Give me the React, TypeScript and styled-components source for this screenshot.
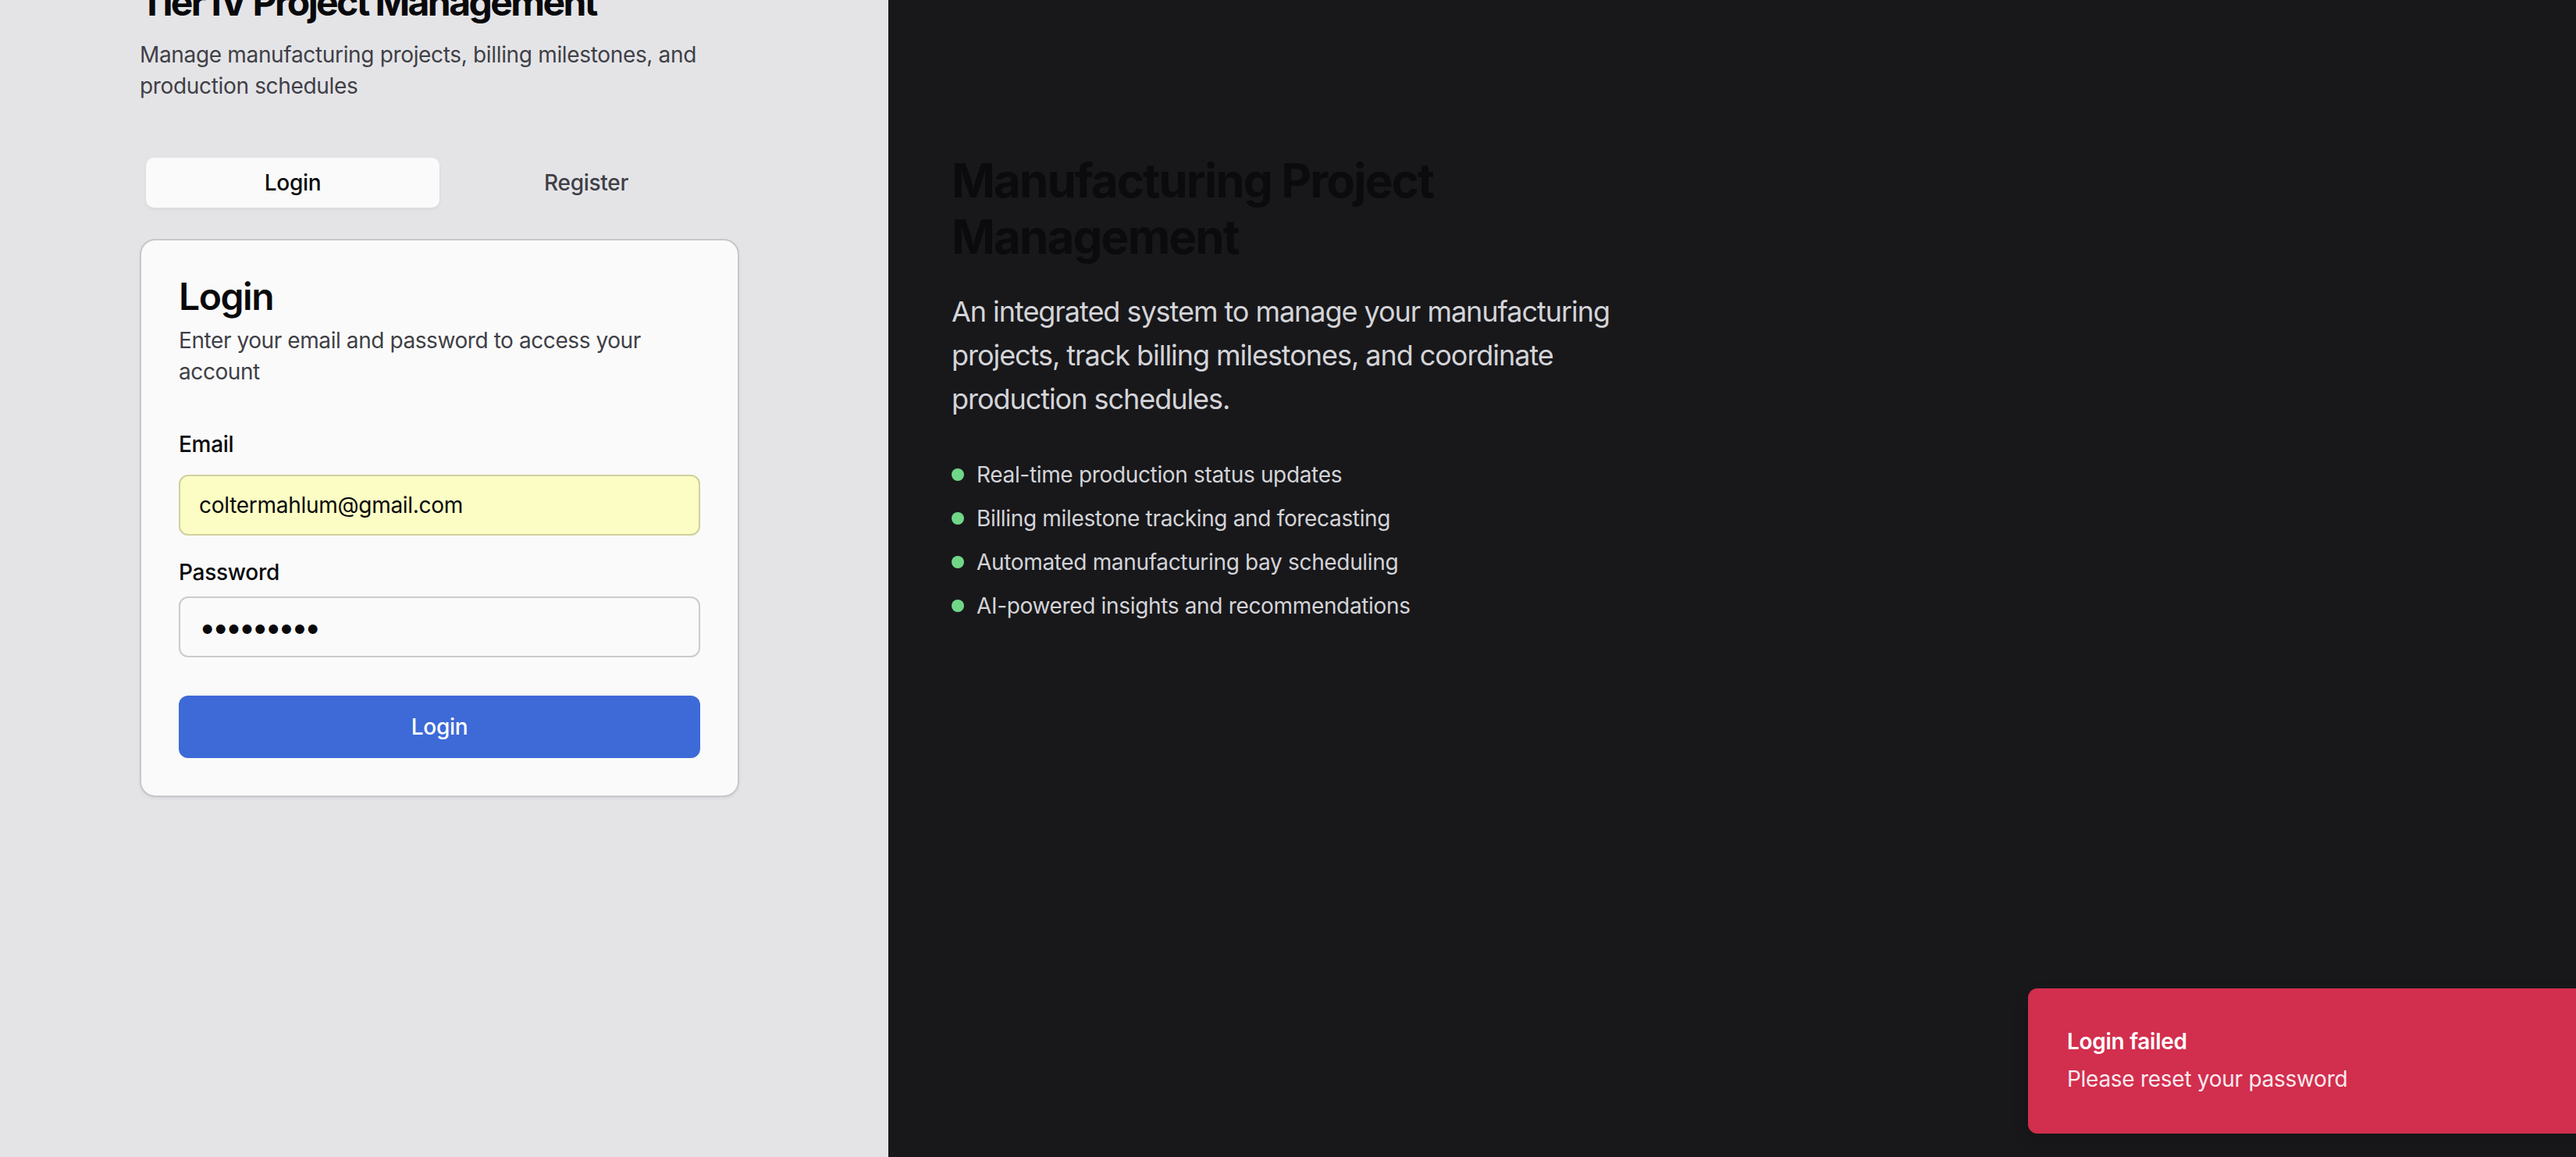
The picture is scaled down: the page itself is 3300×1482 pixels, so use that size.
import React from "react";
import styled, { createGlobalStyle } from "styled-components";

const GlobalStyle = createGlobalStyle`
  html, body {
    margin: 0;
    padding: 0;
    width: 3300px;
    height: 1482px;
    overflow: hidden;
    font-family: Inter, "Noto Sans", "Liberation Sans", sans-serif;
    -webkit-font-smoothing: antialiased;
  }
  * { box-sizing: border-box; }
`;

const Page = styled.div`
  position: relative;
  display: grid;
  grid-template-columns: 1138px 1fr;
  width: 3300px;
  height: 1482px;
  overflow: hidden;
`;

const LeftPanel = styled.section`
  background: #e4e4e7;
  padding-left: 179px;
`;

const LeftInner = styled.div`
  width: 768px;
  margin-top: -29px;
  display: flex;
  flex-direction: column;
`;

const AppTitle = styled.h1`
  margin: 0;
  font-size: 48px;
  line-height: 64px;
  font-weight: 700;
  letter-spacing: -0.054em;
  color: #09090b;
`;

const AppSubtitle = styled.p`
  margin: 15px 0 0;
  font-size: 28px;
  line-height: 40px;
  color: #3f3f46;
  letter-spacing: -0.012em;
`;

const TabList = styled.div`
  margin-top: 64px;
  height: 80px;
  padding: 8px;
  display: grid;
  grid-template-columns: 1fr 1fr;
  border-radius: 12px;
  background: #e4e4e7;
`;

const Tab = styled.button<{ $active?: boolean }>`
  border: none;
  border-radius: 10px;
  font-family: inherit;
  font-size: 28px;
  font-weight: 500;
  letter-spacing: -0.01em;
  cursor: pointer;
  background: ${(p) => (p.$active ? "#fafafa" : "transparent")};
  color: ${(p) => (p.$active ? "#09090b" : "#3f3f46")};
  box-shadow: ${(p) => (p.$active ? "0 2px 4px rgba(0,0,0,0.06)" : "none")};
`;

const Card = styled.div`
  margin-top: 32px;
  background: #fafafa;
  border: 2px solid #c7c7cb;
  border-radius: 20px;
  padding: 48px;
  box-shadow: 0 2px 4px rgba(0, 0, 0, 0.05);
  display: flex;
  flex-direction: column;
`;

const CardTitle = styled.h2`
  margin: 0;
  font-size: 48px;
  line-height: 48px;
  font-weight: 600;
  letter-spacing: -0.03em;
  color: #09090b;
`;

const CardDescription = styled.p`
  margin: 12px 0 0;
  font-size: 28px;
  line-height: 40px;
  color: #3f3f46;
  letter-spacing: -0.015em;
`;

const Form = styled.form`
  margin-top: 48px;
  display: flex;
  flex-direction: column;
`;

const Label = styled.label<{ $top: number }>`
  margin-top: ${(p) => p.$top}px;
  font-size: 28px;
  line-height: 40px;
  font-weight: 500;
  color: #09090b;
  letter-spacing: -0.01em;
`;

const Input = styled.input<{ $autofill?: boolean; $top: number }>`
  margin-top: ${(p) => p.$top}px;
  height: 78px;
  width: 100%;
  padding: 0 24px;
  border-radius: 12px;
  border: 2px solid ${(p) => (p.$autofill ? "#cfd09e" : "#cbcbcd")};
  background: ${(p) => (p.$autofill ? "#fbfdc4" : "#fafafa")};
  font-family: inherit;
  font-size: 28px;
  color: #09090b;
  outline: none;
  letter-spacing: -0.01em;

  &[type="password"] {
    font-size: 38px;
    letter-spacing: -4.5px;
  }
`;

const SubmitButton = styled.button`
  margin-top: 49px;
  height: 80px;
  border: none;
  border-radius: 12px;
  background: #3d6ad7;
  color: #ffffff;
  font-family: inherit;
  font-size: 28px;
  font-weight: 500;
  letter-spacing: -0.01em;
  cursor: pointer;
`;

const RightPanel = styled.section`
  background: #18181b;
  padding: 195px 80px 80px 81px;
`;

const HeroTitle = styled.h2`
  margin: 0;
  max-width: 896px;
  font-size: 60px;
  line-height: 72px;
  font-weight: 700;
  letter-spacing: -0.031em;
  color: #0b0b0d;
`;

const HeroText = styled.p`
  margin: 32px 0 0;
  max-width: 896px;
  font-size: 36px;
  line-height: 56px;
  color: #d4d4d8;
  letter-spacing: -0.029em;
`;

const FeatureList = styled.ul`
  margin: 49px 0 0;
  padding: 0;
  list-style: none;
  display: flex;
  flex-direction: column;
  gap: 16px;
`;

const FeatureItem = styled.li`
  display: flex;
  align-items: center;
  gap: 16px;
  font-size: 28px;
  line-height: 40px;
  color: #d4d4d8;
  letter-spacing: -0.012em;
`;

const Dot = styled.span`
  width: 16px;
  height: 16px;
  border-radius: 50%;
  background: #70d789;
  flex-shrink: 0;
`;

const Toast = styled.div`
  position: absolute;
  left: 2598px;
  top: 1266px;
  width: 776px;
  padding: 46px 64px 48px 48px;
  background: #d22e4e;
  border: 2px solid #d22e4e;
  border-radius: 12px;
  display: grid;
  gap: 8px;
  color: #ffffff;
  box-shadow: 0 8px 20px rgba(0, 0, 0, 0.15);
`;

const ToastTitle = styled.div`
  font-size: 28px;
  line-height: 40px;
  font-weight: 600;
  letter-spacing: -0.01em;
`;

const ToastDescription = styled.div`
  font-size: 28px;
  line-height: 40px;
  opacity: 0.9;
  letter-spacing: -0.01em;
`;

const features = [
  "Real-time production status updates",
  "Billing milestone tracking and forecasting",
  "Automated manufacturing bay scheduling",
  "AI-powered insights and recommendations",
];

export default function App() {
  return (
    <>
      <GlobalStyle />
      <Page>
        <LeftPanel>
          <LeftInner>
            <AppTitle>Tier IV Project Management</AppTitle>
            <AppSubtitle>
              Manage manufacturing projects, billing milestones, and production schedules
            </AppSubtitle>
            <TabList>
              <Tab $active>Login</Tab>
              <Tab>Register</Tab>
            </TabList>
            <Card>
              <CardTitle>Login</CardTitle>
              <CardDescription>
                Enter your email and password to access your account
              </CardDescription>
              <Form onSubmit={(e) => e.preventDefault()}>
                <Label $top={5} htmlFor="email">Email</Label>
                <Input
                  id="email"
                  $top={19}
                  $autofill
                  readOnly
                  value="coltermahlum@gmail.com"
                />
                <Label $top={27} htmlFor="password">Password</Label>
                <Input
                  id="password"
                  type="password"
                  $top={11}
                  readOnly
                  value="123456789"
                />
                <SubmitButton type="submit">Login</SubmitButton>
              </Form>
            </Card>
          </LeftInner>
        </LeftPanel>
        <RightPanel>
          <HeroTitle>Manufacturing Project Management</HeroTitle>
          <HeroText>
            An integrated system to manage your manufacturing projects, track billing
            milestones, and coordinate production schedules.
          </HeroText>
          <FeatureList>
            {features.map((f) => (
              <FeatureItem key={f}>
                <Dot />
                {f}
              </FeatureItem>
            ))}
          </FeatureList>
        </RightPanel>
        <Toast>
          <ToastTitle>Login failed</ToastTitle>
          <ToastDescription>Please reset your password</ToastDescription>
        </Toast>
      </Page>
    </>
  );
}
